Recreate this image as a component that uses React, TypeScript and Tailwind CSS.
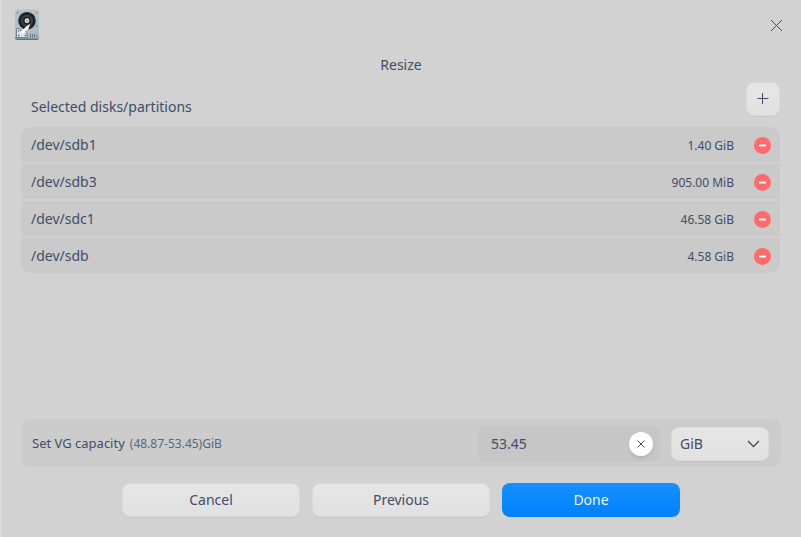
import React from "react";

const disks = [
  { name: "/dev/sdb1", size: "1.40 GiB" },
  { name: "/dev/sdb3", size: "905.00 MiB" },
  { name: "/dev/sdc1", size: "46.58 GiB" },
  { name: "/dev/sdb", size: "4.58 GiB" },
];

const raised =
  "rounded-lg bg-linear-to-b from-[#e6e6e6] to-[#e1e1e1] border border-[#dadada] shadow-[0_1px_1px_rgba(0,0,0,0.06)] text-[#414d68]";

function DiskIcon() {
  return (
    <svg width="26" height="32" viewBox="0 0 26 32">
      <defs>
        <linearGradient id="metal" x1="0" y1="0" x2="0" y2="1">
          <stop offset="0" stopColor="#b8c1c6" />
          <stop offset="0.5" stopColor="#b3c0c8" />
          <stop offset="1" stopColor="#a6b8c3" />
        </linearGradient>
      </defs>
      <rect x="1" y="1" width="24" height="30" rx="2.5" fill="#5f727d" />
      <rect x="1" y="0.6" width="24" height="29" rx="2.5" fill="url(#metal)" />
      <circle cx="3.6" cy="3.8" r="1" fill="#8c9aa2" />
      <circle cx="22.4" cy="3.8" r="1" fill="#8c9aa2" />
      <circle cx="22.6" cy="17" r="0.9" fill="#7d8e98" />
      <circle cx="13" cy="11.7" r="8.8" fill="#1f2227" />
      <circle cx="13" cy="11.7" r="5" fill="none" stroke="#3d4248" strokeWidth="2" />
      <circle cx="13" cy="11.7" r="2.4" fill="#dadcde" />
      <circle cx="13" cy="11.7" r="0.8" fill="#7d838a" />
      <path d="M2.5 19.5H5.5L7 22.5H12.5L13.5 28.5H2.5Z" fill="#dce4e9" stroke="#647a88" strokeWidth="0.9" />
      <path d="M16.2 15L14.4 20L8.5 25L6.5 23L12.5 17.3Z" fill="#ffffff" />
      <path d="M4 26.5h1.4M10.8 26.5h1.4M4 21.8h1.2" stroke="#40586a" strokeWidth="1.3" />
      <path d="M16.5 24.8v3.8M18.5 24.8v3.8M20.5 24.8v3.8M22.7 25.8v2" stroke="#647b89" strokeWidth="1" />
    </svg>
  );
}

export default function App() {
  return (
    <div className="flex h-[537px] w-[801px] flex-col border-l border-[#dedede] bg-[#d2d2d2] pr-5 pl-5 font-['Noto_Sans',sans-serif] text-[14px] leading-5 text-[#414d68]">
      <header className="-mx-5 flex h-[50px] shrink-0 items-center justify-between pr-[18px] pl-[13px]">
        <DiskIcon />
        <button aria-label="Close">
          <svg width="13" height="13" viewBox="0 0 13 13" fill="none" stroke="#414d68">
            <path d="M1 1L12 12M12 1L1 12" />
          </svg>
        </button>
      </header>

      <h1 className="-mr-5 -ml-5 mt-[5px] h-5 shrink-0 text-center">Resize</h1>

      <div className="mt-[7px] mr-px flex h-[34px] shrink-0 items-start justify-between pl-[10px]">
        <h2 className="mt-[15px]">Selected disks/partitions</h2>
        <button aria-label="Add" className={`flex h-[34px] w-[34px] items-center justify-center ${raised}`}>
          <svg width="12" height="12" viewBox="0 0 12 12" stroke="#414d68">
            <path d="M0.5 5.5H11.5M5.5 0V11" />
          </svg>
        </button>
      </div>

      <ul className="mt-[11px] mr-px flex shrink-0 flex-col gap-[2px] overflow-hidden rounded-[10px]">
        {disks.map((d) => (
          <li key={d.name} className="flex h-[35px] items-center bg-[#cacaca] pr-[9px] pl-[10px]">
            <span className="flex-1">{d.name}</span>
            <span className="pt-0.5 text-[12px]">{d.size}</span>
            <button aria-label="Remove" className="mt-[2px] ml-5 flex h-[17px] w-[17px] items-center justify-center rounded-full bg-[#ff6a6a]">
              <svg width="7" height="3" viewBox="0 0 7 3">
                <rect x="0" y="0.4" width="7" height="2.2" rx="0.6" fill="#fff" />
              </svg>
            </button>
          </li>
        ))}
      </ul>

      <section className="mt-auto flex h-12 shrink-0 items-center rounded-lg bg-[#cccccc] pr-3 pl-[11px]">
        <span className="text-[13px]">Set VG capacity</span>
        <span className="ml-[5px] flex-1 pt-0.5 text-[12px] text-[#526a7f]">(48.87-53.45)GiB</span>
        <div className="mt-px flex h-9 w-[182px] items-center justify-between rounded-lg bg-[#c6c6c6] pr-[7px] pl-[13px]">
          <span>53.45</span>
          <button aria-label="Clear" className="flex h-6 w-6 items-center justify-center rounded-full bg-white shadow-[0_2px_3px_rgba(0,0,0,0.1)]">
            <svg width="8" height="8" viewBox="0 0 8 8" fill="none" stroke="#414d68">
              <path d="M0.5 0.5L7.5 7.5M7.5 0.5L0.5 7.5" />
            </svg>
          </button>
        </div>
        <button className={`mt-px ml-[11px] flex h-[34px] w-[98px] items-center justify-between pr-2 pl-2 ${raised}`}>
          GiB
          <svg width="13" height="8" viewBox="0 0 13 8" fill="none" stroke="#414d68" strokeWidth="1.4">
            <path d="M1 1L6.5 6.5L12 1" />
          </svg>
        </button>
      </section>

      <footer className="mt-4 mb-5 flex h-[34px] shrink-0 justify-center gap-3">
        <button className={`w-[178px] ${raised}`}>Cancel</button>
        <button className={`w-[178px] ${raised}`}>Previous</button>
        <button className="w-[178px] rounded-lg bg-linear-to-b from-[#1790ff] to-[#0080ff] text-[#edf5ff]">Done</button>
      </footer>
    </div>
  );
}
